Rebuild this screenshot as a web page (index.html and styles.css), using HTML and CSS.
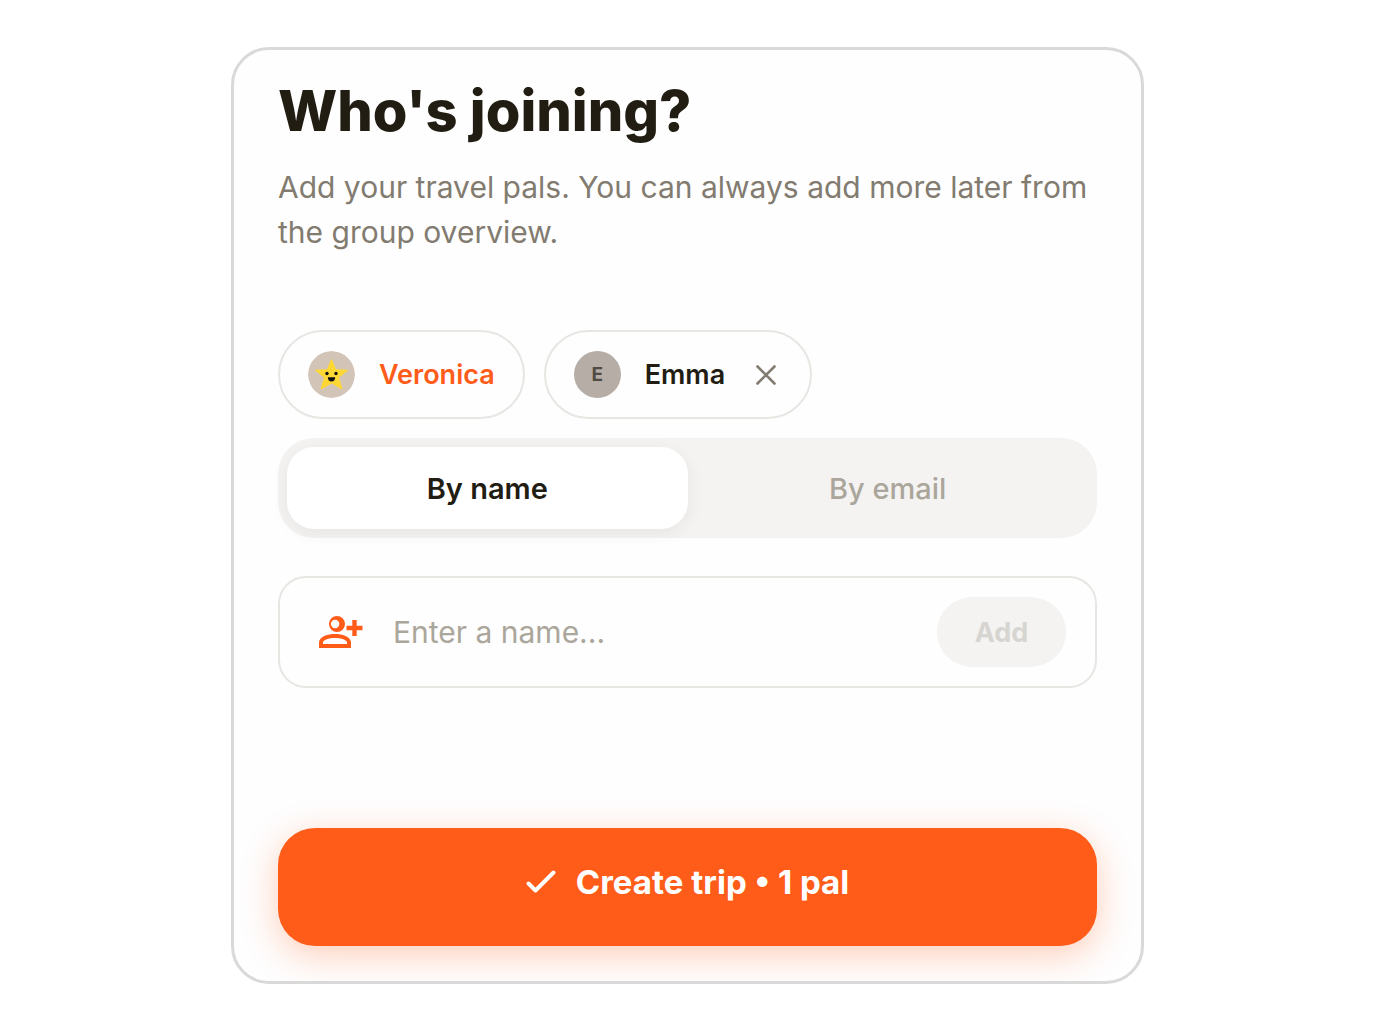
FILE: index.html
```html
<!DOCTYPE html>
<html lang="en">
<head>
<meta charset="utf-8">
<meta name="viewport" content="width=device-width, initial-scale=1">
<title>Who's joining?</title>
<link rel="stylesheet" href="styles.css">
</head>
<body>
<main class="card">
  <header class="intro">
    <h1 class="title">Who's joining?</h1>
    <p class="subtitle">Add your travel pals. You can always add more later from the group overview.</p>
  </header>

  <form class="form">
    <ul class="chips">
      <li class="chip chip-owner">
        <svg class="avatar" viewBox="0 0 47 47" aria-hidden="true">
          <circle cx="23.5" cy="23.5" r="23.5" fill="#d3c4b8"/>
          <path d="M23.5 8.5 27.7 18.7 39.5 19.2 30.5 26.5 34 38 23.5 32 13 38 16.500 26.500 7.500 19.200 19.300 18.700Z" fill="#fdd835" stroke="#fdd835" stroke-linejoin="round"/>
          <circle cx="19" cy="22.500" r="1.700" fill="#111"/>
          <circle cx="28" cy="22.500" r="1.700" fill="#111"/>
          <path d="M19.800 26.300h7.400c0 2.800-1.500 4.300-3.700 4.300s-3.700-1.500-3.700-4.300Z" fill="#111"/>
        </svg>
        <span>Veronica</span>
      </li>
      <li class="chip">
        <span class="avatar avatar-initial" aria-hidden="true">E</span>
        <span>Emma</span>
        <button class="remove" type="button" aria-label="Remove Emma">
          <svg viewBox="0 0 22 22" width="22" height="22" fill="none" stroke="#827b70" stroke-width="2.600" stroke-linecap="round"><path d="m2.500 2.500 17 17m0-17-17 17"/></svg>
        </button>
      </li>
    </ul>

    <div class="tabs" role="tablist">
      <button class="tab tab-active" type="button" role="tab" aria-selected="true">By name</button>
      <button class="tab" type="button" role="tab" aria-selected="false">By email</button>
    </div>

    <div class="field">
      <label class="field-icon" for="pal-name" aria-label="Name">
        <svg viewBox="0 0 44 34" width="44" height="34" fill="#ff5c1a">
          <path fill-rule="evenodd" d="M18 1a8 8 0 1 1 0 16 8 8 0 0 1 0-16Zm-1.900 3.800a4.200 4.200 0 1 0 0 8.400 4.200 4.200 0 0 0 0-8.400Z"/>
          <path fill-rule="evenodd" d="M0 33v-5.500C0 21.500 9 19 16 19s16 2.500 16 8.500V33Zm4-4h24v-1.500c0-2.500-6-4.500-12-4.500s-12 2-12 4.500Z"/>
          <path d="M33.300 5h4.400v5.800h5.800v4.400h-5.800v5.800h-4.400v-5.800h-5.800v-4.400h5.800Z"/>
        </svg>
      </label>
      <input class="field-input" id="pal-name" type="text" placeholder="Enter a name...">
      <button class="add" type="button" disabled>Add</button>
    </div>

    <button class="submit" type="submit">
      <svg viewBox="0 0 30 24" width="30" height="24" fill="none" stroke="#fff" stroke-width="3.900" stroke-linecap="round" stroke-linejoin="round"><path d="m2.500 13.500 7 7L27.500 2.500"/></svg>
      <span>Create trip • 1 pal</span>
    </button>
  </form>
</main>
</body>
</html>
```
FILE: styles.css
```css
* {
  box-sizing: border-box;
}

body {
  margin: 0;
  padding: 47px 24px;
  background: #fff;
  color: #221d12;
  font-family: Inter, "Liberation Sans", sans-serif;
}

button,
input {
  font: inherit;
  color: inherit;
  border: 0;
  padding: 0;
  background: none;
}

.card {
  max-width: 913px;
  margin: 0 auto;
  padding: 29px 44px 35px;
  border: 3px solid #d9d9d9;
  border-radius: 38px;
  background: #fefefe;
  overflow: hidden;
}

.title {
  margin: 0 0 22px;
  font-size: 56px;
  line-height: 64px;
  font-weight: 800;
}

.subtitle {
  margin: 0;
  font-size: 30px;
  line-height: 45px;
  color: #827b70;
}

.form {
  margin-top: 75px;
}

.chips {
  display: flex;
  flex-wrap: wrap;
  gap: 19px;
  margin: 0 0 19px;
  padding: 0;
  list-style: none;
}

.chip {
  display: flex;
  align-items: center;
  gap: 24px;
  height: 89px;
  padding: 0 28px;
  border: 2px solid #e7e6e3;
  border-radius: 45px;
  font-size: 27px;
  font-weight: 600;
}

.chip-owner {
  color: #ff5c1a;
}

.avatar {
  flex: none;
  width: 47px;
  height: 47px;
  border-radius: 50%;
}

.avatar-initial {
  display: grid;
  place-items: center;
  background: #b5ada6;
  color: #504a42;
  font-size: 19px;
  font-weight: 700;
}

.remove {
  display: grid;
  place-items: center;
  width: 33px;
  height: 33px;
}

.tabs {
  display: grid;
  grid-template-columns: 1fr 1fr;
  height: 100px;
  padding: 9px;
  border-radius: 36px;
  background: #f4f3f1;
}

.tab {
  border-radius: 27px;
  color: #aba69b;
  font-size: 29px;
  font-weight: 500;
}

.tab-active {
  background: #fff;
  color: #221d12;
  font-weight: 600;
  box-shadow: 0 4px 18px rgba(0, 0, 0, 0.06);
}

.field {
  display: flex;
  align-items: center;
  height: 112px;
  margin-top: 38px;
  padding: 0 29px 0 39px;
  border: 2px solid #e7e6e3;
  border-radius: 28px;
}

.field-icon {
  display: flex;
}

.field-input {
  flex: 1;
  min-width: 0;
  margin: 0 30px;
  font-size: 30px;
  outline: 0;
}

.field-input::placeholder {
  color: #aba69b;
  opacity: 1;
}

.add {
  width: 129px;
  height: 70px;
  border-radius: 35px;
  background: #f4f3f1;
  color: #d7d5d1;
  font-size: 27px;
  font-weight: 700;
}

.submit {
  display: flex;
  align-items: center;
  justify-content: center;
  gap: 20px;
  width: 100%;
  height: 118px;
  margin-top: 140px;
  padding-bottom: 10px;
  border-radius: 37px;
  background: #ff5c1a;
  color: #fff;
  font-size: 33px;
  font-weight: 700;
  box-shadow: 0 9px 36px rgba(255, 92, 26, 0.3);
}
```
